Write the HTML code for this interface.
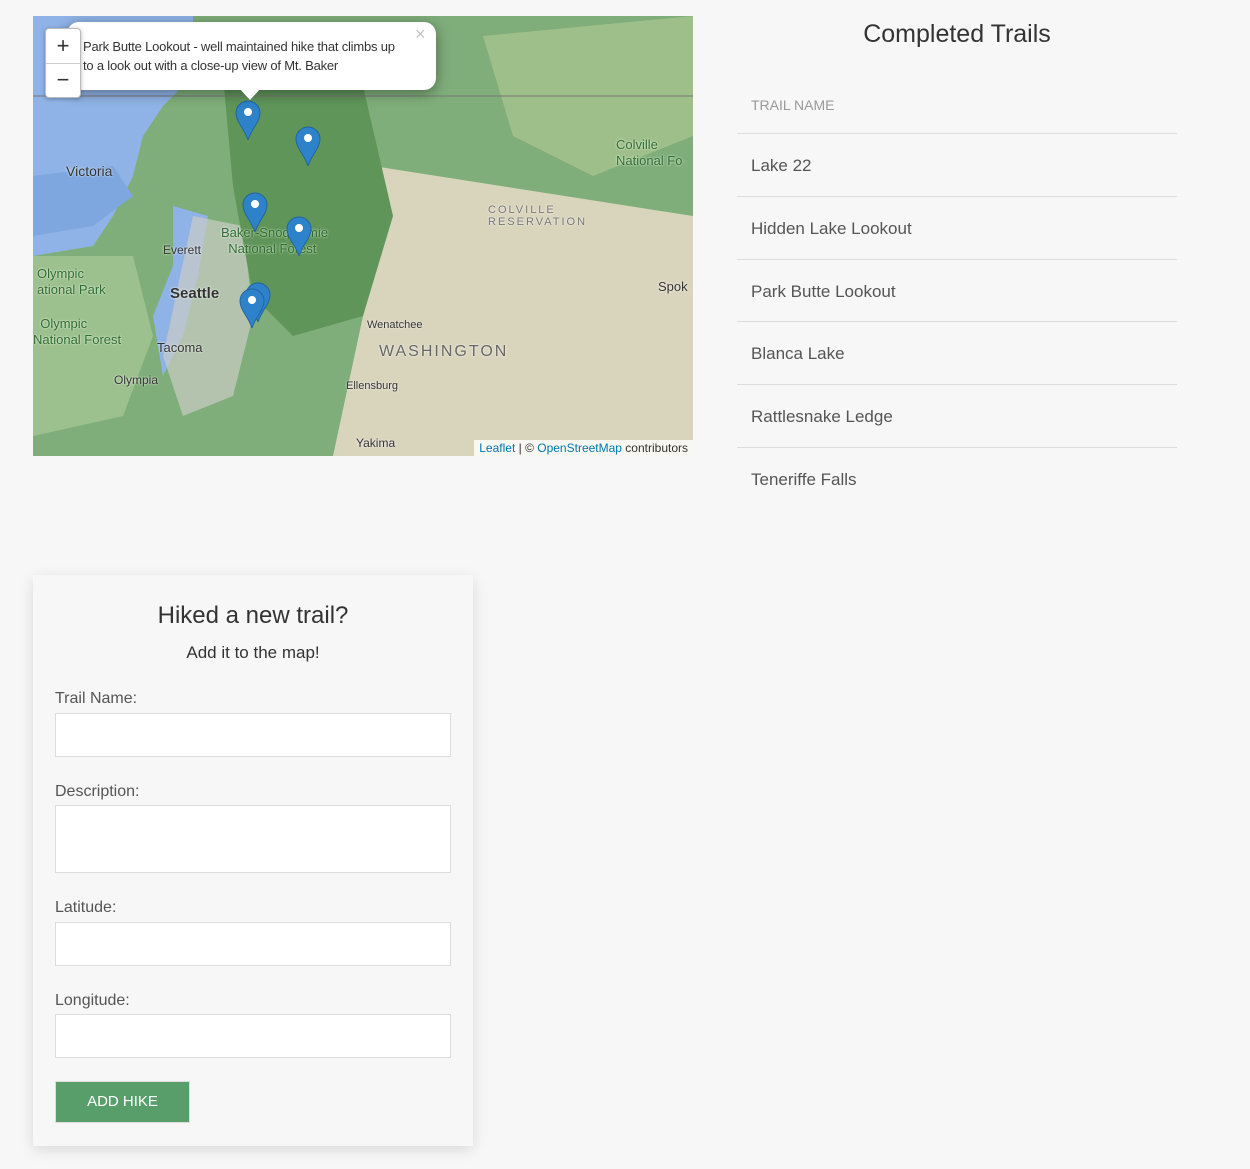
<!DOCTYPE html>
<html><head><style>
body{margin:0;background:#f7f7f7;font-family:"Liberation Sans",sans-serif;color:#333;width:1250px;height:1169px;position:relative;overflow:hidden}
.map{position:absolute;left:33px;top:16px;width:660px;height:440px;overflow:hidden;background:#7fae7a}
.abs{position:absolute}
.lbl{position:absolute;font-size:13px;color:#333;text-shadow:0 0 2px #fff}
h2{position:absolute;left:737px;width:440px;text-align:center;top:20px;margin:0;font-weight:400;font-size:25px;color:#333}
.th{position:absolute;left:751px;top:97px;font-size:14px;color:#999}
.row{position:absolute;left:737px;width:440px;border-top:1px solid #ddd;height:62px}
.row span{position:absolute;left:14px;top:22px;font-size:17px;color:#555}
.card{position:absolute;left:33px;top:575px;width:440px;height:571px;background:#f7f7f7;box-shadow:0 4px 14px rgba(0,0,0,.12)}
.card .t{position:absolute;left:0;width:440px;text-align:center}
.lab{position:absolute;left:22px;font-size:16px;color:#555}
.inp{position:absolute;left:22px;width:394px;background:#fff;border:1px solid #ddd}
.btn{position:absolute;left:22px;top:506px;width:133px;height:40px;background:#589e6a;border:1px solid #ddd;color:#fff;font-size:15px;text-align:center;line-height:40px}
.pin{position:absolute;width:26px;height:40px}
</style></head><body>
<div class="map">
 <svg class="abs" width="660" height="440" style="left:0;top:0">
  <path d="M0 0H160V60L130 90 110 120 100 160 80 200 60 230 0 240Z" fill="#8fb3e6"/>
  <path d="M0 160L80 150 100 180 60 210 0 220Z" fill="#7ea7e0"/>
  <path d="M140 190L175 200 165 260 150 320 130 360 120 300 140 250Z" fill="#8fb3e6"/>
  <path d="M340 150L660 200V440H300L330 300 340 230Z" fill="#d9d4bc"/>
  <path d="M450 20L660 0V120L560 160 480 120Z" fill="#9fbf8a"/>
  <path d="M160 200L210 210 220 300 200 380 150 400 130 340Z" fill="#c9ccc4" opacity=".7"/>
  <path d="M0 240L100 240 120 320 90 400 0 420Z" fill="#9cc08e"/>
  <path d="M190 60L330 70 360 200 330 300 260 320 220 280 200 170Z" fill="#5f9558"/>
  <path d="M0 80H660" stroke="#777" stroke-width="1"/>
 </svg>
 <div class="lbl" style="left:33px;top:147px;font-size:14px">Victoria</div>
 <div class="lbl" style="left:137px;top:269px;font-size:15px;font-weight:bold">Seattle</div>
 <div class="lbl" style="left:124px;top:324px">Tacoma</div>
 <div class="lbl" style="left:81px;top:357px;font-size:12px">Olympia</div>
 <div class="lbl" style="left:130px;top:227px;font-size:12px">Everett</div>
 <div class="lbl" style="left:346px;top:327px;font-size:16px;letter-spacing:2px;color:#666">WASHINGTON</div>
 <div class="lbl" style="left:334px;top:303px;font-size:11px">Wenatchee</div>
 <div class="lbl" style="left:313px;top:364px;font-size:11px">Ellensburg</div>
 <div class="lbl" style="left:323px;top:420px;font-size:12px">Yakima</div>
 <div class="lbl" style="left:625px;top:263px;font-size:13px">Spok</div>
 <div class="lbl" style="left:455px;top:188px;font-size:11px;letter-spacing:2px;color:#777;line-height:12px">COLVILLE<br>RESERVATION</div>
 <div class="lbl" style="left:4px;top:250px;color:#2e6e2e;line-height:16px">Olympic<br>ational Park</div>
 <div class="lbl" style="left:0;top:300px;color:#2e6e2e;line-height:16px">&nbsp;&nbsp;Olympic<br>National Forest</div>
 <div class="lbl" style="left:583px;top:121px;color:#2e6e2e;line-height:16px">Colville<br>National Fo</div>
 <div class="lbl" style="left:188px;top:209px;color:#2e6e2e;line-height:16px">Baker-Snoqualmie<br>&nbsp;&nbsp;National Forest</div>
 <svg class="pin" style="left:202px;top:84px" viewBox="0 0 26 40"><path d="M13 40C9 28 1 22 1 13A12 12 0 0 1 25 13C25 22 17 28 13 40Z" fill="#2e82c9" stroke="#2265a0"/><circle cx="13" cy="12" r="4" fill="#fff"/></svg>
 <svg class="pin" style="left:262px;top:110px" viewBox="0 0 26 40"><path d="M13 40C9 28 1 22 1 13A12 12 0 0 1 25 13C25 22 17 28 13 40Z" fill="#2e82c9" stroke="#2265a0"/><circle cx="13" cy="12" r="4" fill="#fff"/></svg>
 <svg class="pin" style="left:209px;top:176px" viewBox="0 0 26 40"><path d="M13 40C9 28 1 22 1 13A12 12 0 0 1 25 13C25 22 17 28 13 40Z" fill="#2e82c9" stroke="#2265a0"/><circle cx="13" cy="12" r="4" fill="#fff"/></svg>
 <svg class="pin" style="left:253px;top:200px" viewBox="0 0 26 40"><path d="M13 40C9 28 1 22 1 13A12 12 0 0 1 25 13C25 22 17 28 13 40Z" fill="#2e82c9" stroke="#2265a0"/><circle cx="13" cy="12" r="4" fill="#fff"/></svg>
 <svg class="pin" style="left:212px;top:266px" viewBox="0 0 26 40"><path d="M13 40C9 28 1 22 1 13A12 12 0 0 1 25 13C25 22 17 28 13 40Z" fill="#2e82c9" stroke="#2265a0"/></svg>
 <svg class="pin" style="left:206px;top:272px" viewBox="0 0 26 40"><path d="M13 40C9 28 1 22 1 13A12 12 0 0 1 25 13C25 22 17 28 13 40Z" fill="#2e82c9" stroke="#2265a0"/><circle cx="13" cy="12" r="4" fill="#fff"/></svg>
 <div class="abs" style="left:34px;top:6px;width:369px;height:68px;background:#fff;border-radius:12px;box-shadow:0 3px 14px rgba(0,0,0,.4)"></div>
 <div class="abs" style="left:206px;top:72px;width:0;height:0;border-left:11px solid transparent;border-right:11px solid transparent;border-top:12px solid #fff"></div>
 <div class="abs" style="left:50px;top:21px;font-size:13px;line-height:19px;color:#333;letter-spacing:-0.2px">Park Butte Lookout - well maintained hike that climbs up<br>to a look out with a close-up view of Mt. Baker</div>
 <div class="abs" style="left:382px;top:8px;font-size:18px;color:#c3c3c3">×</div>
 <div class="abs" style="left:12px;top:12px;width:34px;height:68px;background:#fff;border:1px solid #bbb;border-radius:4px;box-shadow:0 1px 4px rgba(0,0,0,.3)">
  <div style="height:34px;border-bottom:1px solid #ccc;text-align:center;font-size:22px;line-height:34px">+</div>
  <div style="text-align:center;font-size:22px;line-height:32px">−</div>
 </div>
 <div class="abs" style="right:0;bottom:0;background:rgba(255,255,255,.8);font-size:12px;padding:1px 5px;color:#333"><span style="color:#0078a8">Leaflet</span> | © <span style="color:#0078a8">OpenStreetMap</span> contributors</div>
</div>
<h2>Completed Trails</h2>
<div class="th">TRAIL NAME</div>
<div class="row" style="top:133px"><span>Lake 22</span></div>
<div class="row" style="top:196px"><span>Hidden Lake Lookout</span></div>
<div class="row" style="top:259px"><span>Park Butte Lookout</span></div>
<div class="row" style="top:321px"><span>Blanca Lake</span></div>
<div class="row" style="top:384px"><span>Rattlesnake Ledge</span></div>
<div class="row" style="top:447px"><span>Teneriffe Falls</span></div>
<div class="card">
 <div class="t" style="top:27px;font-size:24px">Hiked a new trail?</div>
 <div class="t" style="top:68px;font-size:17px">Add it to the map!</div>
 <div class="lab" style="top:115px">Trail Name:</div>
 <div class="inp" style="top:138px;height:42px"></div>
 <div class="lab" style="top:208px">Description:</div>
 <div class="inp" style="top:230px;height:66px"></div>
 <div class="lab" style="top:324px">Latitude:</div>
 <div class="inp" style="top:347px;height:42px"></div>
 <div class="lab" style="top:417px">Longitude:</div>
 <div class="inp" style="top:439px;height:42px"></div>
 <div class="btn">ADD HIKE</div>
</div>
</body></html>
